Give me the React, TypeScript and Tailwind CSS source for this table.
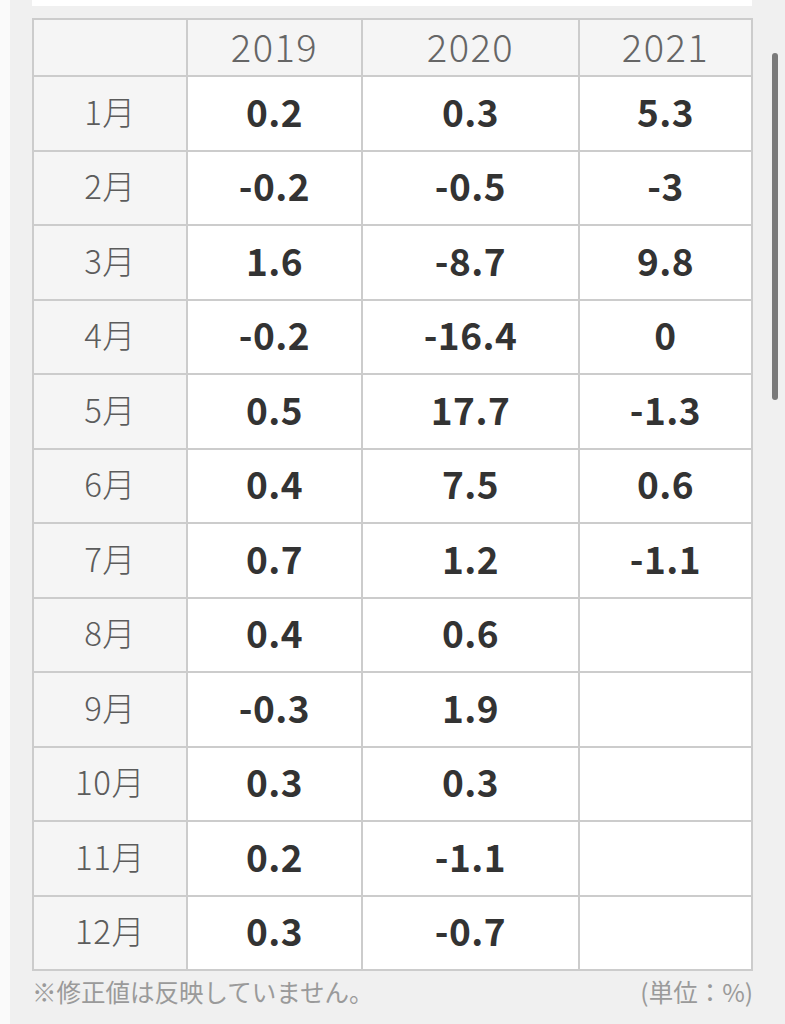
import React from "react";

const years = ["2019", "2020", "2021"];

const rows: { month: string; values: string[] }[] = [
  { month: "1月", values: ["0.2", "0.3", "5.3"] },
  { month: "2月", values: ["-0.2", "-0.5", "-3"] },
  { month: "3月", values: ["1.6", "-8.7", "9.8"] },
  { month: "4月", values: ["-0.2", "-16.4", "0"] },
  { month: "5月", values: ["0.5", "17.7", "-1.3"] },
  { month: "6月", values: ["0.4", "7.5", "0.6"] },
  { month: "7月", values: ["0.7", "1.2", "-1.1"] },
  { month: "8月", values: ["0.4", "0.6", ""] },
  { month: "9月", values: ["-0.3", "1.9", ""] },
  { month: "10月", values: ["0.3", "0.3", ""] },
  { month: "11月", values: ["0.2", "-1.1", ""] },
  { month: "12月", values: ["0.3", "-0.7", ""] },
];

const font = { fontFamily: '"Noto Sans CJK JP", "Noto Sans", sans-serif' };

export default function App() {
  return (
    <div className="relative flex min-h-[1024px] w-[785px] bg-[#f0f0f0]" style={font}>
      <div className="w-[10px] shrink-0 bg-[#fafafa]" />
      <div className="flex w-[743px] flex-col pl-[22px]">
        <div className="h-[6px] w-[720px] bg-white" />

        <div className="mt-[12px] w-[721px] border-l-2 border-t-2 border-[#cccccc]">
          <div className="grid grid-cols-[154px_175px_217px_173px]">
            <div className="h-[57px] border-b-2 border-r-2 border-[#cccccc] bg-[#f5f5f5]" />
            {years.map((y) => (
              <div
                key={y}
                className="flex h-[57px] items-center justify-center border-b-2 border-r-2 border-[#cccccc] bg-[#f5f5f5] pb-[4px] text-[38px] font-light tracking-[1.5px] text-[#666666]"
              >
                {y}
              </div>
            ))}
            {rows.map((r) => (
              <React.Fragment key={r.month}>
                <div className="flex h-[74.5px] items-center justify-center border-b-2 border-r-2 border-[#cccccc] bg-[#f5f5f5] pb-[4px] text-[33px] font-light tracking-[0.5px] text-[#5c5c5c]">
                  {r.month}
                </div>
                {r.values.map((v, i) => (
                  <div
                    key={i}
                    className="flex h-[74.5px] items-center justify-center border-b-2 border-r-2 border-[#cccccc] bg-white pb-[4px] text-[37px] font-semibold tracking-[0.5px] text-[#333333]"
                  >
                    {v}
                  </div>
                ))}
              </React.Fragment>
            ))}
          </div>
        </div>

        <div className="mt-[3px] flex w-[721px] justify-between text-[24.5px] leading-[36px] text-[#9a9a9a]">
          <span>※修正値は反映していません。</span>
          <span>(単位：%)</span>
        </div>
      </div>

      <div className="absolute left-[772px] top-[53px] h-[347px] w-[6px] rounded-full bg-[#7a7a7a]" />
    </div>
  );
}
